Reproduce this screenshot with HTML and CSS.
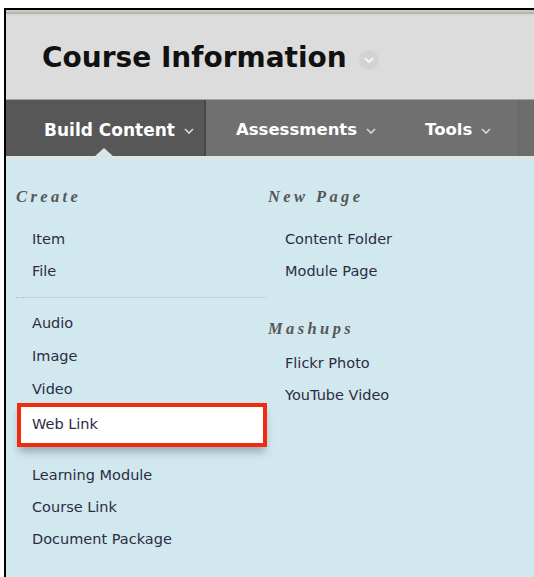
FILE: index.html
```html
<!DOCTYPE html>
<html lang="en">
<head>
<meta charset="utf-8">
<title>Course Information</title>
<link rel="stylesheet" href="styles.css">
</head>
<body>
<div class="frame">
  <header class="page-header">
    <h1 class="page-title">Course Information</h1>
    <span class="title-menu" aria-hidden="true">
      <svg width="10" height="6" viewBox="0 0 10 6"><polyline points="1,1 5,5 9,1" fill="none" stroke="#fff" stroke-width="1.6"/></svg>
    </span>
  </header>

  <nav class="action-bar">
    <div class="tab tab-active">Build Content
      <svg class="chev" width="10" height="6" viewBox="0 0 10 6"><polyline points="1,1 5,5 9,1" fill="none" stroke="#d6d6d6" stroke-width="1.7"/></svg>
      <span class="pointer"></span>
    </div>
    <div class="tab">Assessments
      <svg class="chev" width="10" height="6" viewBox="0 0 10 6"><polyline points="1,1 5,5 9,1" fill="none" stroke="#d6d6d6" stroke-width="1.7"/></svg>
    </div>
    <div class="tab">Tools
      <svg class="chev" width="10" height="6" viewBox="0 0 10 6"><polyline points="1,1 5,5 9,1" fill="none" stroke="#d6d6d6" stroke-width="1.7"/></svg>
    </div>
    <div class="tab tab-end"></div>
  </nav>

  <div class="menu">
    <section class="col col-left">
      <h3 class="group-title">Create</h3>
      <ul class="items">
        <li>Item</li>
        <li>File</li>
      </ul>
      <hr class="sep">
      <ul class="items items-media">
        <li>Audio</li>
        <li>Image</li>
        <li>Video</li>
        <li class="callout">Web Link</li>
      </ul>
      <ul class="items">
        <li>Learning Module</li>
        <li>Course Link</li>
        <li>Document Package</li>
      </ul>
    </section>

    <section class="col col-right">
      <h3 class="group-title">New Page</h3>
      <ul class="items">
        <li>Content Folder</li>
        <li>Module Page</li>
      </ul>
      <h3 class="group-title group-mashups">Mashups</h3>
      <ul class="items items-mashups">
        <li>Flickr Photo</li>
        <li>YouTube Video</li>
      </ul>
    </section>
  </div>
</div>
</body>
</html>
```

FILE: styles.css
```css
html, body {
  margin: 0;
  padding: 0;
  background: #fff;
}

.frame {
  margin: 8px 0 0 4px;
  border-left: 2px solid #000;
  border-top: 2px solid #000;
  height: 569px;
  box-sizing: border-box;
  background: #d2e8ef;
  font-family: "DejaVu Sans", sans-serif;
}

/* Page header */
.page-header {
  box-sizing: border-box;
  height: 90px;
  padding: 7px 0 0 36px;
  display: flex;
  align-items: center;
  background: linear-gradient(#cacac3 0, #cacac3 2px, #b5b5ae 2px, #b5b5ae 4px, #cfcfcf 4px, #dcdcdc 6px, #dcdcdc 100%);
  border-bottom: 1px solid #a2a2a2;
}

.page-title {
  margin: 0;
  font-size: 28px;
  line-height: 28px;
  font-weight: bold;
  color: #111;
}

.title-menu {
  width: 20px;
  height: 20px;
  margin: 4px 0 0 12px;
  border-radius: 50%;
  background: #d3d3d3;
  display: flex;
  align-items: center;
  justify-content: center;
}

/* Action bar */
.action-bar {
  display: flex;
  height: 56px;
  background: #707070;
  border-bottom: 3px solid #e1e4e5;
}

.tab {
  position: relative;
  display: flex;
  align-items: center;
  box-sizing: border-box;
  padding: 4px 19px 0 30px;
  color: #fff;
  font-weight: bold;
  font-size: 16.5px;
  line-height: 1;
  white-space: nowrap;
}

.tab-active {
  width: 200px;
  padding-left: 38px;
  padding-right: 0;
  font-size: 17px;
  background: #575757;
  border-right: 2px solid #474747;
}

.tab-end {
  margin-left: 8px;
  flex: 1;
  min-width: 0;
  padding: 0;
  border-left: 1px solid #646464;
  background: #6d6d6d;
}

.chev {
  flex: none;
  margin-left: 9px;
  margin-top: 1px;
}

.pointer {
  position: absolute;
  left: 88px;
  bottom: -1px;
  width: 0;
  height: 0;
  border-left: 10px solid transparent;
  border-right: 10px solid transparent;
  border-bottom: 9px solid #d5e7ec;
}

/* Build content menu */
.menu {
  display: grid;
  grid-template-columns: 250px 1fr;
  column-gap: 2px;
  padding: 28px 0 0 10px;
}

.group-title {
  margin: 0;
  height: 20px;
  line-height: 20px;
  font-family: "Liberation Serif", serif;
  font-style: italic;
  font-weight: bold;
  font-size: 16.5px;
  letter-spacing: 3.4px;
  color: #575757;
}

.items {
  list-style: none;
  margin: 16px 0 0;
  padding: 0;
}

.items li {
  height: 32px;
  line-height: 32px;
  padding-left: 16px;
  font-size: 14.5px;
  color: #2c2c44;
}

.sep {
  margin: 10px 0 9px;
  border: 0;
  border-top: 1px dotted #a9bcc2;
  height: 0;
}

.items-media {
  margin-top: 0;
}

.items-media li {
  height: 33px;
  line-height: 33px;
}

.items-media li.callout {
  height: 36px;
  line-height: 34px;
  margin: 1px 3px 16px 5px;
  padding-left: 11px;
  background: #fff;
  box-shadow: 0 0 0 4px #f12a10, 0 7px 8px 2px rgba(60, 70, 75, 0.38);
}

.col-right .items li {
  padding-left: 17px;
}

.group-mashups {
  margin-top: 32px;
}

.items-mashups {
  margin-top: 8px;
}
```
